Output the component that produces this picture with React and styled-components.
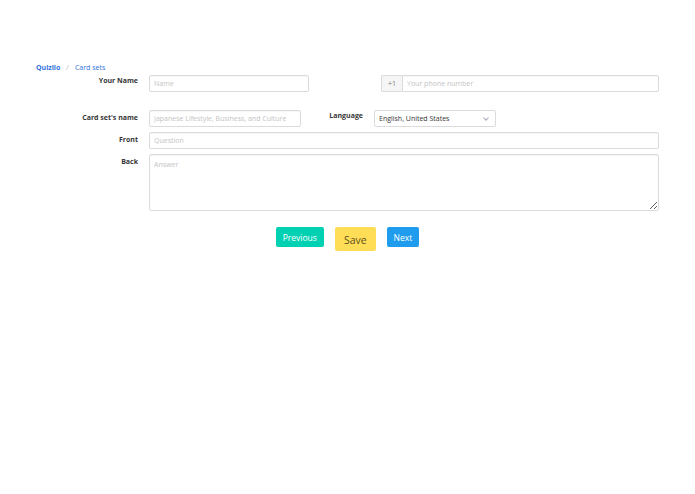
import React from 'react';
import styled, { createGlobalStyle } from 'styled-components';

const GlobalStyle = createGlobalStyle`
  html, body {
    margin: 0;
    padding: 0;
    background: #fff;
    font-family: "Open Sans", "Noto Sans", sans-serif;
    color: #4a4a4a;
  }
`;

const Page = styled.div`
  width: 695px;
  padding-top: 62px;
  box-sizing: border-box;
`;

const Breadcrumb = styled.nav`
  display: flex;
  align-items: center;
  gap: 6px;
  padding-left: 36px;
  height: 10px;
  font-size: 7px;
`;

const Crumb = styled.a`
  color: #3273dc;
  font-weight: ${p => (p.$active ? 700 : 400)};
  text-decoration: none;
`;

const Slash = styled.span`
  color: #b5b5b5;
`;

const Form = styled.form`
  display: flex;
  flex-direction: column;
  margin-top: 3px;
`;

const Row = styled.div`
  display: flex;
  align-items: flex-start;
  margin-top: ${p => p.$mt || 0}px;
`;

const Label = styled.label`
  width: ${p => p.$w || 102}px;
  margin-left: ${p => p.$ml || 36}px;
  margin-right: ${p => p.$mr || 11}px;
  text-align: right;
  font-size: 7px;
  font-weight: 700;
  color: #363636;
  line-height: 10px;
  padding-top: ${p => p.$pt || 1}px;
  flex-shrink: 0;
`;

const Input = styled.input`
  box-sizing: border-box;
  width: ${p => p.$w}px;
  height: ${p => p.$h || 17}px;
  border: 1px solid #dbdbdb;
  border-radius: 2px;
  padding: 0 4px;
  font-family: inherit;
  font-size: 7px;
  color: #363636;
  box-shadow: inset 0 1px 1px rgba(10, 10, 10, 0.04);
  outline: none;
  &::placeholder {
    color: #c4c4c4;
  }
`;

const AddonGroup = styled.div`
  display: flex;
  margin-left: ${p => p.$ml}px;
`;

const Addon = styled.span`
  box-sizing: border-box;
  display: flex;
  align-items: center;
  justify-content: center;
  width: 21px;
  height: 17px;
  background: #f5f5f5;
  border: 1px solid #dbdbdb;
  border-right: none;
  border-radius: 2px 0 0 2px;
  font-size: 7px;
  color: #7a7a7a;
`;

const PhoneInput = styled(Input)`
  border-radius: 0 2px 2px 0;
`;

const SelectBox = styled.div`
  position: relative;
  box-sizing: border-box;
  width: 122px;
  height: 17px;
  border: 1px solid #dbdbdb;
  border-radius: 2px;
  display: flex;
  align-items: center;
  padding-left: 4px;
  font-size: 7px;
  color: #363636;
`;

const Chevron = styled.span`
  position: absolute;
  right: 7px;
  top: 5px;
  width: 3px;
  height: 3px;
  border-left: 1px solid #a3abbb;
  border-bottom: 1px solid #a3abbb;
  transform: rotate(-45deg);
`;

const TextArea = styled.textarea`
  box-sizing: border-box;
  width: 510px;
  height: 57px;
  border: 1px solid #dbdbdb;
  border-radius: 2px;
  padding: 5px 4px;
  font-family: inherit;
  font-size: 7px;
  color: #363636;
  box-shadow: inset 0 1px 1px rgba(10, 10, 10, 0.04);
  outline: none;
  margin: 0;
  &::placeholder {
    color: #c4c4c4;
  }
`;

const Buttons = styled.div`
  display: flex;
  justify-content: center;
  align-items: flex-start;
  gap: 11px;
  margin-top: 16px;
`;

const colors = {
  primary: ['#00d1b2', '#fff'],
  warning: ['#ffdd57', 'rgba(0,0,0,0.7)'],
  info: ['#209cee', '#fff'],
};

const Button = styled.button`
  box-sizing: border-box;
  height: ${p => (p.$large ? 24 : 20)}px;
  padding: 0 ${p => (p.$large ? 9 : 7)}px;
  padding-top: ${p => (p.$large ? 2 : 0)}px;
  border: none;
  border-radius: 2px;
  background: ${p => colors[p.$kind][0]};
  color: ${p => colors[p.$kind][1]};
  font-family: inherit;
  font-size: ${p => (p.$large ? 10.5 : 8.5)}px;
  cursor: pointer;
`;

export default function App() {
  return (
    <Page>
      <GlobalStyle />
      <Breadcrumb>
        <Crumb $active href="#">Quizlio</Crumb>
        <Slash>/</Slash>
        <Crumb href="#">Card sets</Crumb>
      </Breadcrumb>
      <Form onSubmit={e => e.preventDefault()}>
        <Row>
          <Label>Your Name</Label>
          <Input $w={160} placeholder="Name" />
          <AddonGroup $ml={72}>
            <Addon>+1</Addon>
            <PhoneInput $w={257} placeholder="Your phone number" />
          </AddonGroup>
        </Row>
        <Row $mt={18}>
          <Label $pt={3}>Card set's name</Label>
          <Input $w={152} placeholder="Japanese Lifestyle, Business, and Culture" />
          <Label $w={40} $ml={22} $mr={11} $pt={1}>Language</Label>
          <SelectBox>
            English, United States
            <Chevron />
          </SelectBox>
        </Row>
        <Row $mt={5}>
          <Label $pt={3}>Front</Label>
          <Input $w={510} placeholder="Question" />
        </Row>
        <Row $mt={5}>
          <Label $pt={3}>Back</Label>
          <TextArea placeholder="Answer" />
        </Row>
        <Buttons>
          <Button type="button" $kind="primary">Previous</Button>
          <Button type="submit" $kind="warning" $large>Save</Button>
          <Button type="button" $kind="info">Next</Button>
        </Buttons>
      </Form>
    </Page>
  );
}
